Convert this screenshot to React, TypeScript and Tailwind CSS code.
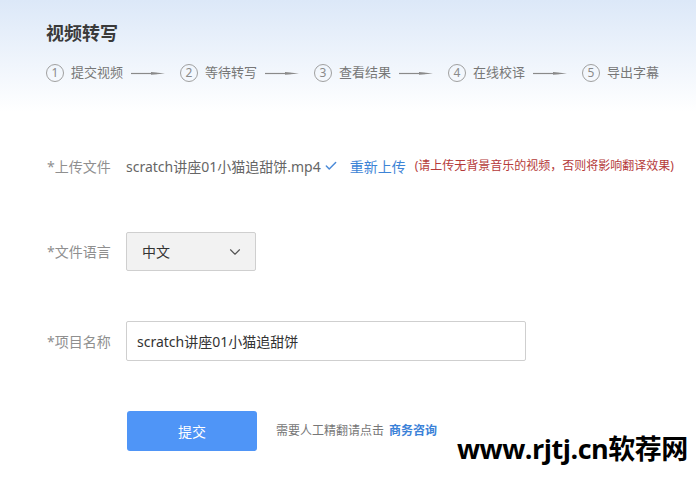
import { ChevronDown, Check } from "lucide-react";

const steps = ["提交视频", "等待转写", "查看结果", "在线校译", "导出字幕"];

const Arrow = () => (
    <svg width="34" height="8" viewBox="0 0 34 8" className="shrink-0">
        <line x1="0" y1="4.5" x2="26" y2="4.5" stroke="#8a8a8a" strokeWidth="1.2" />
        <polygon points="20,3 34,4.5 20,5.8" fill="#8a8a8a" />
    </svg>
);

const App = () => {
    return (
        <div className="relative w-[696px] h-[496px] overflow-hidden bg-white font-['Noto_Sans','Noto_Sans_CJK_SC',sans-serif]">
            <div className="h-[112px] bg-gradient-to-b from-[#dce8f8] to-white px-[46px] pt-[20px]">
                <h1 className="text-[18px] leading-[26px] font-bold text-[#3a3a3a]">视频转写</h1>
                <div className="mt-[17px] flex items-center h-[20px]">
                    {steps.map((s, i) => (
                        <div key={s} className="flex items-center shrink-0">
                            <span className="w-[18px] h-[18px] rounded-full border border-[#a0a0a0] flex items-center justify-center text-[12px] leading-none text-[#8a8a8a]">
                                {i + 1}
                            </span>
                            <span className="ml-[7px] w-[52px] text-[13px] text-[#777] whitespace-nowrap">{s}</span>
                            {i < steps.length - 1 && (
                                <div className="ml-[8px] mr-[15px] flex items-center">
                                    <Arrow />
                                </div>
                            )}
                        </div>
                    ))}
                </div>
            </div>

            <div className="px-[47px] mt-[44px]">
                {/* upload */}
                <div className="flex items-center h-[20px] whitespace-nowrap">
                    <label className="w-[79px] shrink-0 text-[14px] text-[#8f8f8f]">*上传文件</label>
                    <span className="shrink-0 text-[14px] text-[#666]">scratch讲座01小猫追甜饼.mp4</span>
                    <Check size={14} strokeWidth={2.5} className="shrink-0 ml-[3px] text-[#4a8ad8]" />
                    <a href="#" className="shrink-0 ml-[12px] text-[14px] text-[#3d84d6]">重新上传</a>
                    <span className="shrink-0 ml-[9px] text-[12px] text-[#b53a3a]">(请上传无背景音乐的视频，否则将影响翻译效果)</span>
                </div>

                {/* language */}
                <div className="flex items-center mt-[56px]">
                    <label className="w-[79px] shrink-0 text-[14px] text-[#8f8f8f]">*文件语言</label>
                    <div className="w-[130px] h-[39px] border border-[#cfcfcf] rounded-[2px] bg-[#f2f2f2] flex items-center justify-between pl-[15px] pr-[11px]">
                        <span className="text-[14px] text-[#333]">中文</span>
                        <ChevronDown size={18} strokeWidth={1.5} className="text-[#555]" />
                    </div>
                </div>

                {/* project name */}
                <div className="flex items-center mt-[50px]">
                    <label className="w-[79px] shrink-0 text-[14px] text-[#8f8f8f]">*项目名称</label>
                    <input
                        defaultValue="scratch讲座01小猫追甜饼"
                        className="w-[400px] h-[40px] border border-[#cfcfcf] rounded-[2px] px-[10px] text-[14px] text-[#333] outline-none"
                    />
                </div>

                {/* submit */}
                <div className="flex items-center mt-[50px] ml-[80px]">
                    <button className="w-[130px] h-[40px] rounded-[3px] bg-[#4f95f7] text-white text-[14px]">提交</button>
                    <span className="ml-[19px] text-[12px] text-[#777]">需要人工精翻请点击</span>
                    <a href="#" className="ml-[5px] text-[12px] font-bold text-[#3b82d8]">商务咨询</a>
                </div>
            </div>

            <div className="absolute left-[455px] top-[431px] whitespace-nowrap bg-white/80 px-[2px] text-[27px] leading-[36px] font-bold text-black tracking-[-0.5px] font-['Open_Sans','Noto_Sans_CJK_SC',sans-serif]">
                www.rjtj.cn软荐网
            </div>
        </div>
    );
};

export default App;
